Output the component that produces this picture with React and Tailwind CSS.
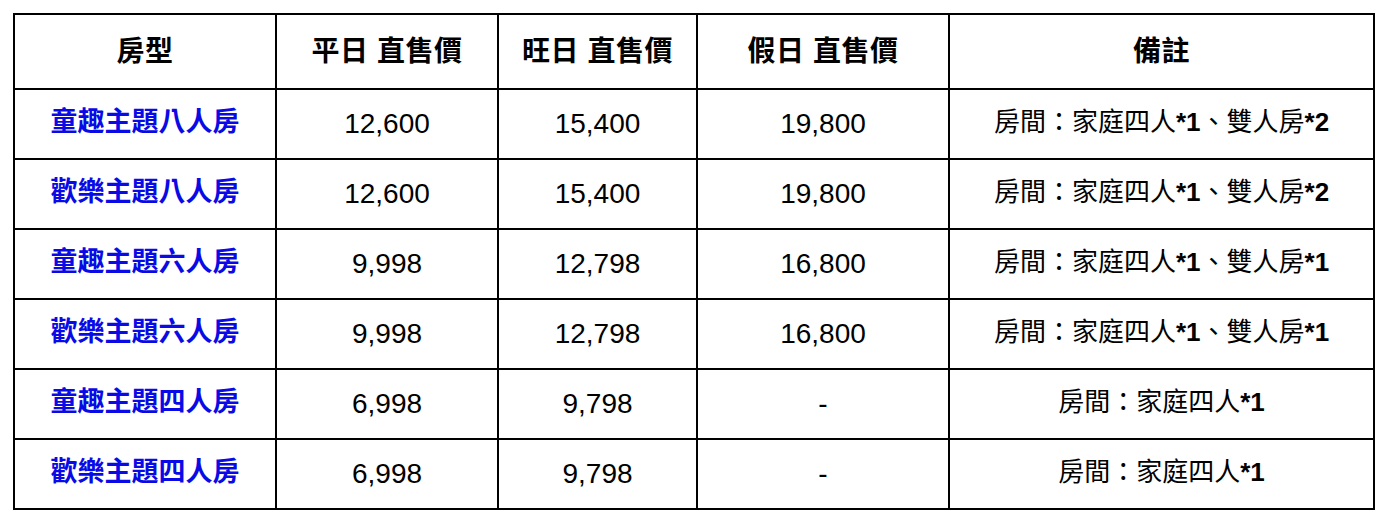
const rows = [
  { name: '童趣主題八人房', a: '12,600', b: '15,400', c: '19,800', note: ['家庭四人', '*1', '雙人房', '*2'] },
  { name: '歡樂主題八人房', a: '12,600', b: '15,400', c: '19,800', note: ['家庭四人', '*1', '雙人房', '*2'] },
  { name: '童趣主題六人房', a: '9,998', b: '12,798', c: '16,800', note: ['家庭四人', '*1', '雙人房', '*1'] },
  { name: '歡樂主題六人房', a: '9,998', b: '12,798', c: '16,800', note: ['家庭四人', '*1', '雙人房', '*1'] },
  { name: '童趣主題四人房', a: '6,998', b: '9,798', c: '-', note: ['家庭四人', '*1'] },
  { name: '歡樂主題四人房', a: '6,998', b: '9,798', c: '-', note: ['家庭四人', '*1'] },
];

const font = { fontFamily: '"Liberation Sans", "Noto Sans CJK TC", sans-serif' };

export default function App() {
  return (
    <div className="bg-white w-[1388px] h-[526px] pt-[13px] pl-[13px]" style={font}>
      <table className="table-fixed border-collapse border-2 border-black w-[1360px] text-black">
        <colgroup>
          <col className="w-[262px]" />
          <col className="w-[222px]" />
          <col className="w-[199px]" />
          <col className="w-[252px]" />
          <col className="w-[425px]" />
        </colgroup>
        <thead>
          <tr className="h-[75px]">
            {['房型', '平日 直售價', '旺日 直售價', '假日 直售價', '備註'].map(h => (
              <th key={h} className="border-2 border-black text-center align-middle text-[28px] font-bold">
                <span className="tracking-[0.5px]">{h}</span>
              </th>
            ))}
          </tr>
        </thead>
        <tbody>
          {rows.map((r, i) => (
            <tr key={i} className="h-[70px]">
              <td className="border-2 border-black text-center align-middle text-[27px] font-bold text-[#0a0ae6] pb-[3px]">
                {r.name}
              </td>
              <td className="border-2 border-black text-center align-middle text-[28px]">{r.a}</td>
              <td className="border-2 border-black text-center align-middle text-[28px]">{r.b}</td>
              <td className="border-2 border-black text-center align-middle text-[28px]">{r.c}</td>
              <td className="border-2 border-black text-center align-middle text-[26px] pb-[3px]">
                房間：{r.note[0]}<span className="font-bold">{r.note[1]}</span>
                {r.note[2] && <>、{r.note[2]}<span className="font-bold">{r.note[3]}</span></>}
              </td>
            </tr>
          ))}
        </tbody>
      </table>
    </div>
  );
}
